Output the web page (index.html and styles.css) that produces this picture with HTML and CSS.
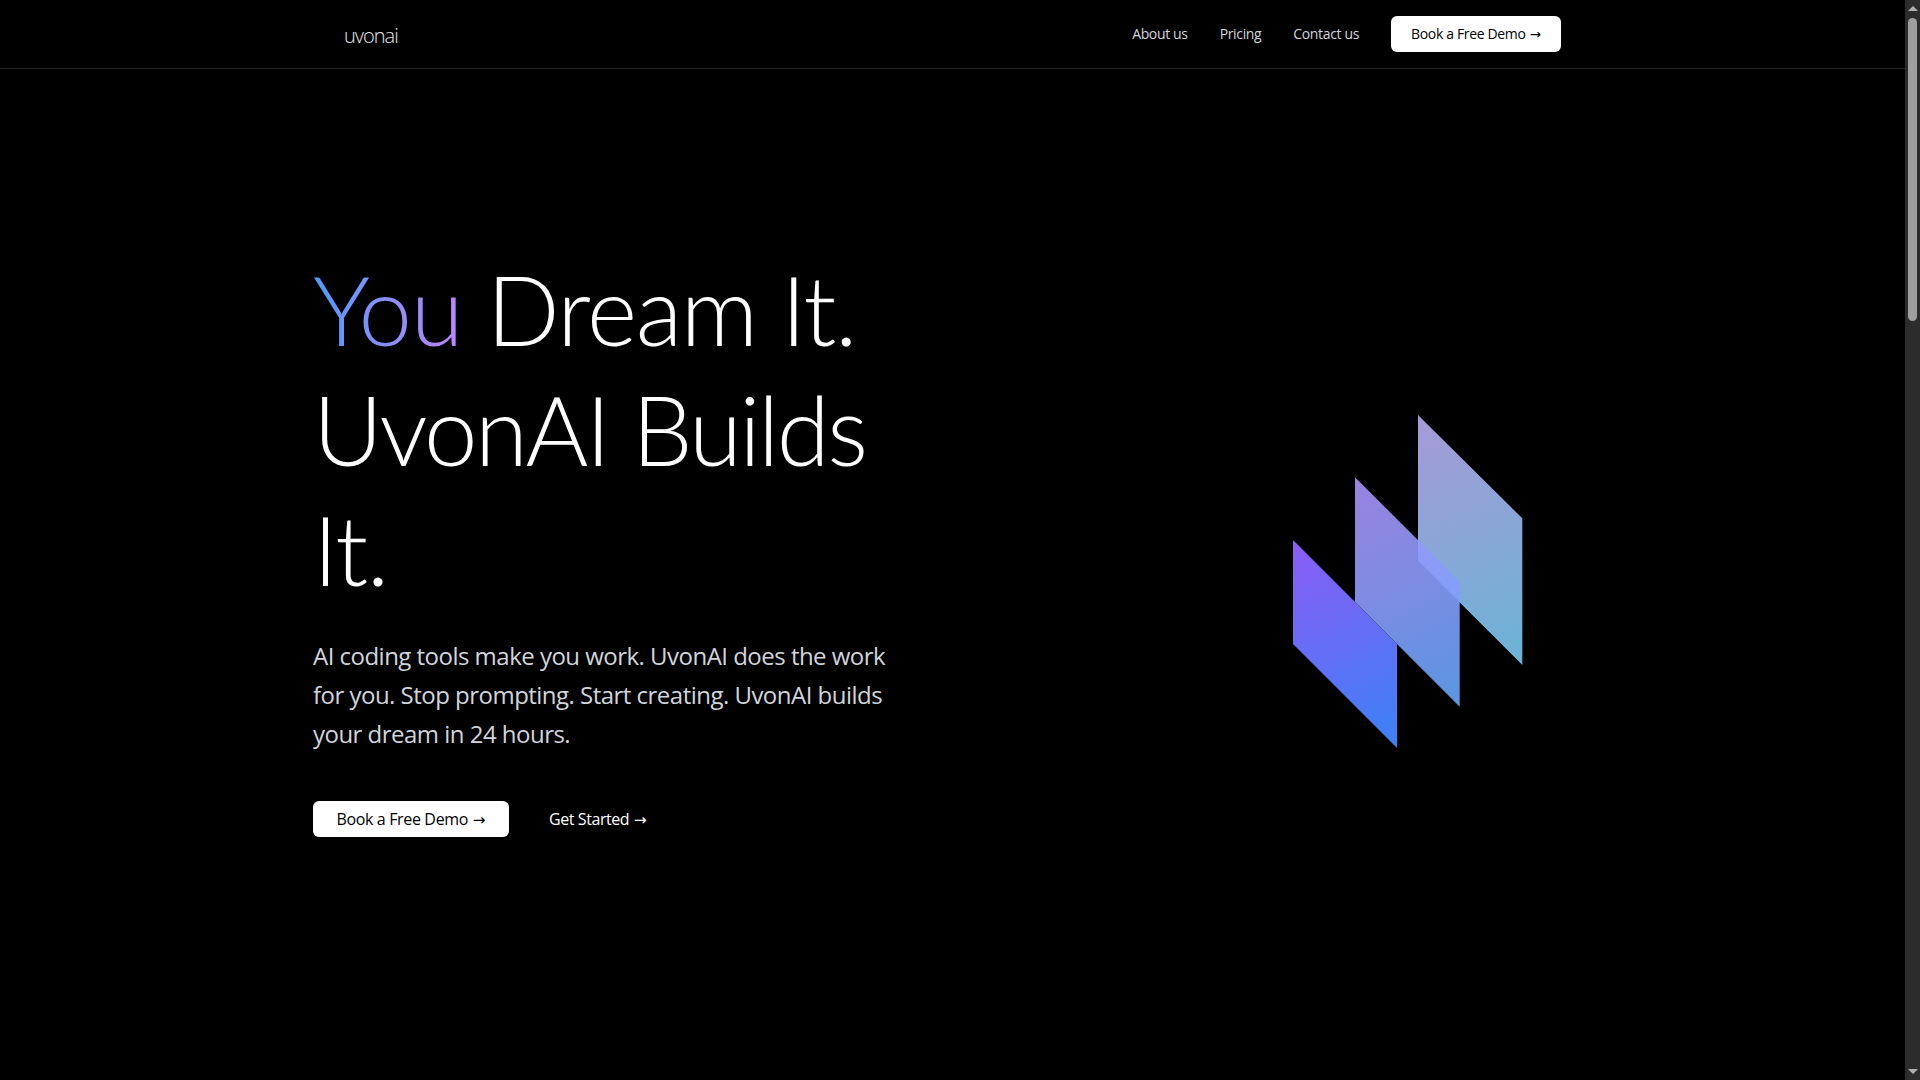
FILE: index.html
```html
<!DOCTYPE html>
<html lang="en">
<head>
<meta charset="utf-8">
<title>UvonAI</title>
<link rel="stylesheet" href="styles.css">
</head>
<body>
<div class="app">
  <main class="page">
    <header class="nav">
      <div class="nav-inner">
        <a class="logo" href="#">uvonai</a>
        <nav class="nav-links">
          <a class="nav-link" href="#">About us</a>
          <a class="nav-link" href="#">Pricing</a>
          <a class="nav-link" href="#">Contact us</a>
          <a class="btn btn-nav" href="#"><span>Book a Free Demo <span class="tip">→</span></span></a>
        </nav>
      </div>
    </header>
    <section class="hero">
      <div class="hero-text">
        <h1><span class="grad">You</span> Dream It. <span class="tight">UvonAI Builds</span> It.</h1>
        <p>AI coding tools make you work. UvonAI does the work for you. Stop prompting. Start creating. UvonAI builds your dream in 24 hours.</p>
        <div class="actions">
          <a class="btn btn-hero" href="#"><span>Book a Free Demo <span class="tip">→</span></span></a>
          <a class="link" href="#">Get Started <span class="tip">→</span></a>
        </div>
      </div>
      <svg class="art" width="230" height="333" viewBox="0 0 230 333" aria-hidden="true">
        <defs>
          <linearGradient id="g1" gradientUnits="userSpaceOnUse" x1="0" y1="125" x2="104" y2="333">
            <stop offset="0" stop-color="#8b5cf6"/><stop offset="1" stop-color="#3b82f6"/>
          </linearGradient>
          <linearGradient id="g2" gradientUnits="userSpaceOnUse" x1="62" y1="62" x2="167" y2="292">
            <stop offset="0" stop-color="#ac90fa"/><stop offset="1" stop-color="#64a7fa"/>
          </linearGradient>
          <linearGradient id="g3" gradientUnits="userSpaceOnUse" x1="125" y1="0" x2="230" y2="250">
            <stop offset="0" stop-color="#c4b5fd"/><stop offset="1" stop-color="#7dd3fc"/>
          </linearGradient>
        </defs>
        <polygon points="125,0 229.3,103.3 229.3,250 125,145.7" fill="url(#g3)" fill-opacity="0.85"/>
        <polygon points="62,62.3 166.7,166.7 166.7,291.7 62,187" fill="url(#g2)" fill-opacity="0.9"/>
        <polygon points="0,125 104,229 104,333 0,229" fill="url(#g1)"/>
      </svg>
    </section>
  </main>
  <aside class="scrollbar" aria-hidden="true">
    <span class="arrow arrow-up"></span>
    <span class="thumb"></span>
    <span class="arrow arrow-down"></span>
  </aside>
</div>
</body>
</html>
```
FILE: styles.css
```css
* { box-sizing: border-box; }
html, body { margin: 0; height: 100%; background: #000; }
body { font-family: "Open Sans", "Noto Sans", sans-serif; color: #fff; overflow: hidden; }
a { text-decoration: none; color: inherit; }

.app { display: flex; height: 1080px; overflow: hidden; }
.page { flex: 1; min-width: 0; }

.nav { height: 69px; border-bottom: 1px solid #222; padding: 16px 344px 0 313px; }
.nav-inner { display: flex; justify-content: space-between; align-items: center; height: 36px; }
.logo { margin-left: 31px; margin-top: 3px; font-size: 20px; font-weight: 300; letter-spacing: -1px; color: #e5e7eb; }
.nav-links { display: flex; align-items: center; gap: 32px; font-size: 14px; color: #d1d5db; letter-spacing: -0.35px; }
.nav-link { padding-bottom: 2px; }

.btn { display: flex; align-items: center; justify-content: center; height: 36px; padding-bottom: 2px; background: #fff; color: #000; border-radius: 6px; }
.btn-nav { width: 170px; }
.btn-hero { width: 196px; padding-bottom: 0; font-size: 16px; letter-spacing: -0.35px; }
.tip { font-family: "DejaVu Sans", sans-serif; font-size: 0.95em; letter-spacing: 0; margin-left: 1px; }

.hero { display: flex; justify-content: space-between; align-items: flex-start; padding: 180px 382px 0 313px; }
.hero-text { width: 600px; }
h1 { margin: 0; width: 580px; font-family: "Lato", "Open Sans", sans-serif; font-size: 96px; line-height: 120px; font-weight: 300; letter-spacing: -1.4px; }
.tight { letter-spacing: -2.5px; }
.grad { background: linear-gradient(90deg, #4f9bfb, #c084fc); -webkit-background-clip: text; background-clip: text; color: transparent; }
p { margin: 27px 0 0; width: 590px; font-size: 24px; line-height: 39px; color: #d1d5db; letter-spacing: -0.52px; }
.actions { display: flex; align-items: center; gap: 40px; margin-top: 48px; }
.link { font-size: 16px; letter-spacing: -0.42px; }
.art { flex: none; margin-top: 166px; }

.scrollbar { flex: none; width: 15px; background: #2c2c2c; display: flex; flex-direction: column; align-items: center; padding: 6px 0; }
.thumb { width: 9px; height: 303px; margin-top: 7px; background: #9f9f9f; border-radius: 5px; }
.arrow { width: 0; height: 0; border-left: 5px solid transparent; border-right: 5px solid transparent; }
.arrow-up { border-bottom: 5px solid #b0b0b0; }
.arrow-down { border-top: 5px solid #b0b0b0; margin-top: auto; }
```
